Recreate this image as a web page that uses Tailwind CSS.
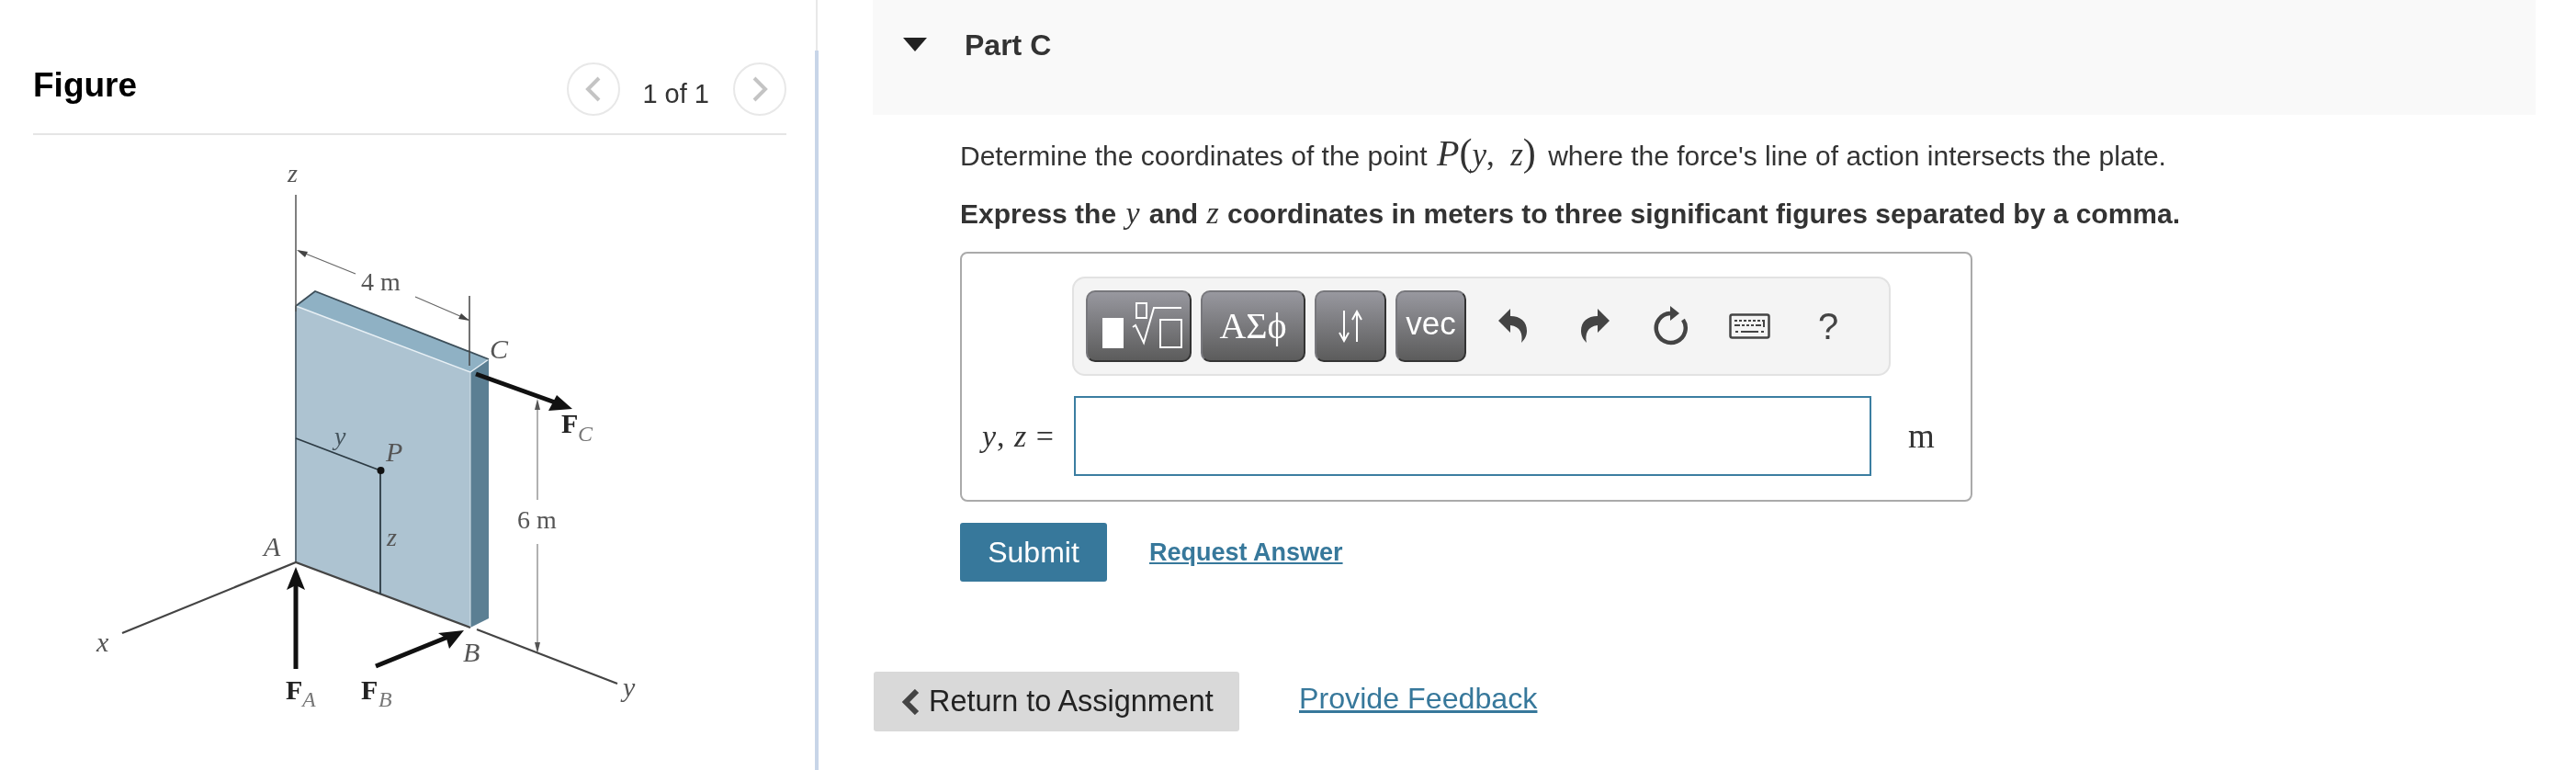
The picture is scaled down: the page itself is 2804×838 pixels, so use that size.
<!DOCTYPE html>
<html lang="en">
<head>
  <meta charset="UTF-8" />
  <title>Part C</title>
  <script src="https://cdn.jsdelivr.net/npm/@tailwindcss/browser@4"></script>
</head>
<body class="bg-white font-['Liberation_Sans',Arial,sans-serif] text-[#333] antialiased">
<div class="flex h-[838px] w-[2804px] overflow-hidden blur-[0.5px]">

  <!-- FIGURE PANEL -->
  <aside class="w-[887px] shrink-0">
    <div class="ml-[36px] flex h-[147px] w-[820px] items-start border-b-2 border-[#e5e5e5] pt-[68px]">
      <h2 class="mt-[5px] text-[37px] leading-[40px] font-bold text-black">Figure</h2>
      <div class="ml-auto flex items-start">
        <span class="flex h-[58px] w-[58px] items-center justify-center rounded-full border-2 border-[#e8e8e8]">
          <svg width="18" height="28" viewBox="0 0 18 28" fill="none" stroke="#c4c4c4" stroke-width="4"><path d="M15 2 3 14l12 12"/></svg>
        </span>
        <span class="mt-[18px] ml-[24px] text-[29px] leading-[32px] text-[#333]">1 of 1</span>
        <span class="ml-[26px] flex h-[58px] w-[58px] items-center justify-center rounded-full border-2 border-[#e8e8e8]">
          <svg width="18" height="28" viewBox="0 0 18 28" fill="none" stroke="#c4c4c4" stroke-width="4"><path d="m3 2 12 12L3 26"/></svg>
        </span>
      </div>
    </div>

    <svg class="font-['Liberation_Serif',serif]" width="887" height="691" viewBox="0 147 887 691" fill="none">
      <!-- plate -->
      <path d="M322 333 343 317 532 391 512 405Z" fill="#8fb1c4"/>
      <path d="M322 333 512 405V683L322 612Z" fill="#adc3d1"/>
      <path d="M512 405 532 391V673L512 683Z" fill="#5b7f93"/>
      <path d="M322 333 512 405 532 391" stroke="#e8f0f5" stroke-width="1.5"/>
      <path d="M322 333 343 317 532 391" stroke="#3d4f5a" stroke-width="1.8"/>
      <path d="M322 333V612" stroke="#5e6f7a" stroke-width="2"/>
      <path d="M512 405V683" stroke="#d5e2ea" stroke-width="1"/>
      <!-- axes -->
      <path d="M133 689 322 612 512 683" stroke="#444" stroke-width="2.2"/>
      <path d="M519 685 672 744" stroke="#444" stroke-width="2.2"/>
      <path d="M322 212V339" stroke="#555" stroke-width="1.5"/>
      <!-- y, z of P -->
      <path d="M322 477 414 512V647" stroke="#2d3b44" stroke-width="1.8"/>
      <circle cx="414.5" cy="512" r="4" fill="#111"/>
      <!-- dimensions -->
      <path d="M325 273 387 298M452 323 510 348" stroke="#666" stroke-width="1.2"/>
      <path d="m323 272 12 2-3 6ZM511 349l-12-2 3-6Z" fill="#444"/>
      <path d="M511 322V398" stroke="#444" stroke-width="1.5"/>
      <path d="M585 440V544M585 592V705" stroke="#888" stroke-width="1.3"/>
      <path d="m585 434 3 12h-6ZM585 711l3-12h-6Z" fill="#555"/>
      <!-- forces -->
      <path d="M518 407 607 439" stroke="#111" stroke-width="5"/>
      <path d="M623 445 597 447 606 430Z" fill="#111"/>
      <path d="M322 728V632" stroke="#111" stroke-width="5"/>
      <path d="M322 617 332 642 322 637 312 642Z" fill="#111"/>
      <path d="M409 725 488 693" stroke="#111" stroke-width="5"/>
      <path d="M505 686 489 706 486 695 477 689Z" fill="#111"/>
      <!-- labels -->
      <g fill="#555" font-size="28" font-style="italic">
        <text x="313" y="198">z</text>
        <text x="533" y="390" font-size="30">C</text>
        <text x="364" y="484" fill="#44535c">y</text>
        <text x="420" y="502" font-size="30">P</text>
        <text x="421" y="594">z</text>
        <text x="287" y="605" font-size="30">A</text>
        <text x="504" y="720" font-size="30">B</text>
        <text x="105" y="709" font-size="30">x</text>
        <text x="678" y="758" font-size="30">y</text>
      </g>
      <g fill="#555" font-size="28">
        <text x="393" y="316">4 m</text>
        <text x="563" y="575">6 m</text>
      </g>
      <g fill="#222" font-size="30" font-weight="700">
        <text x="611" y="471">F</text>
        <text x="311" y="761">F</text>
        <text x="393" y="761">F</text>
      </g>
      <g fill="#777" font-size="24" font-style="italic">
        <text x="629" y="480">C</text>
        <text x="329" y="769">A</text>
        <text x="412" y="769">B</text>
      </g>
    </svg>
  </aside>

  <!-- DIVIDER -->
  <div class="flex w-[4px] shrink-0 flex-col">
    <div class="mx-auto h-[55px] w-[2px] bg-[#e8e8e8]"></div>
    <div class="flex-1 bg-[#c8d5e8]"></div>
  </div>

  <!-- PART C -->
  <main class="flex-1">
    <div class="ml-[59px] flex h-[125px] w-[1810px] items-start bg-[#f9f9f9] pl-[33px]">
      <svg class="mt-[41px]" width="26" height="15" viewBox="0 0 26 15"><path d="M0 0h26L13 15Z" fill="#222"/></svg>
      <h3 class="mt-[31px] ml-[41px] text-[32px] leading-[36px] font-bold text-[#333]">Part C</h3>
    </div>

    <div class="ml-[154px]">
      <p class="mt-[23px] flex h-[36px] items-baseline text-[30px] leading-[36px] whitespace-pre">Determine the coordinates of the point <span class="ml-[2px] font-['Liberation_Serif',serif] text-[40px] italic">P</span><span class="font-['Liberation_Serif',serif] text-[42px] font-light">(</span><span class="font-['Liberation_Serif',serif] text-[35px] italic">y</span><span class="font-['Liberation_Serif',serif] text-[35px]">,  </span><span class="font-['Liberation_Serif',serif] text-[35px] italic">z</span><span class="mr-[5px] font-['Liberation_Serif',serif] text-[42px] font-light">)</span> where the force's line of action intersects the plate.</p>
      <p class="mt-[30px] flex h-[36px] items-baseline text-[30px] leading-[36px] font-bold whitespace-pre">Express the <span class="mx-[2px] font-['Liberation_Serif',serif] text-[34px] font-normal italic">y</span> and <span class="mx-[1px] font-['Liberation_Serif',serif] text-[34px] font-normal italic">z</span> coordinates in meters to three significant figures separated by a comma.</p>

      <!-- ANSWER BOX -->
      <div class="mt-[24px] h-[272px] w-[1102px] rounded-[8px] border-2 border-[#aaa]">
        <div class="mt-[25px] ml-[120px] flex h-[108px] w-[891px] items-center rounded-[14px] border-2 border-[#e2e2e2] bg-[#f4f4f4] pl-[13px]">
          <button class="h-[78px] w-[115px] rounded-[10px] border-2 border-[#77777c] border-r-[#333] border-b-[#333] bg-linear-to-b from-[#98989f] to-[#5c5c5c]">
            <svg width="111" height="74" viewBox="2 2 111 74" fill="none" stroke="#fff" stroke-width="2">
              <rect x="18" y="30" width="23" height="33" fill="#fff" stroke="none"/>
              <rect x="55" y="14" width="11" height="16"/>
              <path d="M51 40l3-2 9 19 11-38h30"/>
              <rect x="81" y="32" width="23" height="30"/>
            </svg>
          </button>
          <button class="ml-[10px] h-[78px] w-[114px] rounded-[10px] border-2 border-[#77777c] border-r-[#333] border-b-[#333] bg-linear-to-b from-[#98989f] to-[#5c5c5c] font-['Liberation_Serif',serif] text-[40px] leading-[70px] text-white">ΑΣϕ</button>
          <button class="ml-[10px] flex h-[78px] w-[78px] items-center justify-center rounded-[10px] border-2 border-[#77777c] border-r-[#333] border-b-[#333] bg-linear-to-b from-[#98989f] to-[#5c5c5c]">
            <svg width="28" height="36" viewBox="0 0 28 36" fill="none" stroke="#fff" stroke-width="2"><path d="M7 1V34M2 25l5 9 5-9M21 35V2M16 11l5-9 5 9"/></svg>
          </button>
          <button class="ml-[10px] h-[78px] w-[77px] rounded-[10px] border-2 border-[#77777c] border-r-[#333] border-b-[#333] bg-linear-to-b from-[#98989f] to-[#5c5c5c] pb-[6px] text-[35px] leading-[60px] text-white">vec</button>

          <svg class="ml-[35px]" width="31" height="38" viewBox="0 0 31 38"><path d="M0 13 13 0V8C24 8 31 14 31 24 31 30 28 34 25 37 27 28 24 19 13 18V26Z" fill="#444"/></svg>
          <svg class="ml-[59px]" width="31" height="38" viewBox="0 0 31 38"><path d="M31 13 18 0V8C7 8 0 14 0 24 0 30 3 34 6 37 4 28 7 19 18 18V26Z" fill="#444"/></svg>
          <svg class="ml-[48px]" width="40" height="44" viewBox="0 0 40 44" fill="none"><path d="M32 15A16 16 0 1 1 18 8" stroke="#444" stroke-width="4.500"/><path d="M18 0 28 8 18 16Z" fill="#444"/></svg>
          <svg class="ml-[42px]" width="45" height="28" viewBox="0 0 45 28" fill="#444">
            <rect x="1.500" y="1.500" width="42" height="25" rx="2" fill="none" stroke="#444" stroke-width="2.500"/>
            <path d="M6 7h3v2H6zM11 7h3v2h-3zM16 7h3v2h-3zM21 7h3v2h-3zM26 7h3v2h-3zM31 7h3v2h-3zM36 7h3v8h-2v-6h-1zM6 12h6v2H6zM14 12h3v2h-3zM19 12h3v2h-3zM24 12h3v2h-3zM29 12h6v2h-6zM7 19h3v2H7zM13 19h19v2H13zM35 19h3v2h-3z"/>
          </svg>
          <span class="ml-[52px] text-[40px] leading-[44px] text-[#444]">?</span>
        </div>

        <div class="mt-[22px] flex items-center pl-[22px]">
          <label class="w-[100px] font-['Liberation_Serif',serif] text-[34px] tracking-[1px] whitespace-pre text-[#333]"><i>y</i>, <i>z</i> =</label>
          <input class="h-[87px] w-[868px] border-2 border-[#3b7ea1] bg-white" />
          <span class="ml-[40px] font-['Liberation_Serif',serif] text-[37px] text-[#333]">m</span>
        </div>
      </div>

      <div class="mt-[23px] flex items-center">
        <button class="h-[64px] w-[160px] rounded-[3px] bg-[#37789b] text-[32px] text-white">Submit</button>
        <a href="#" class="ml-[46px] text-[27px] font-bold text-[#37789b] underline">Request Answer</a>
      </div>
    </div>

    <div class="mt-[98px] ml-[60px] flex items-center">
      <a href="#" class="flex h-[65px] w-[398px] items-center rounded-[3px] bg-[#d9d9d9] pl-[30px] text-[32.400px] text-[#222]">
        <svg width="20" height="28" viewBox="0 0 20 28" fill="none" stroke="#444" stroke-width="6"><path d="M17 2 5 14l12 12"/></svg>
        <span class="ml-[10px]">Return to Assignment</span>
      </a>
      <a href="#" class="mb-[6px] ml-[65px] text-[32.200px] text-[#37789b] underline">Provide Feedback</a>
    </div>
  </main>
</div>
</body>
</html>
